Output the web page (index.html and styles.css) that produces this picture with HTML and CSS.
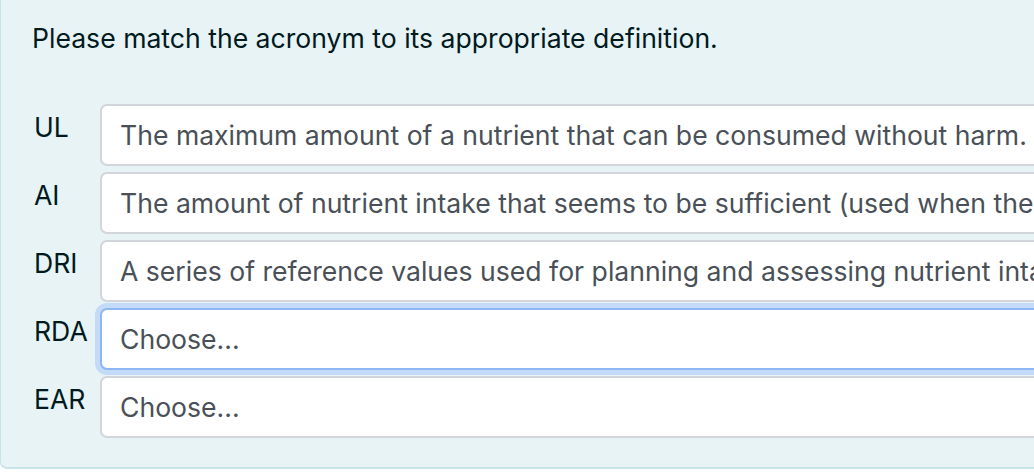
FILE: index.html
```html
<!DOCTYPE html>
<html lang="en">
<head>
<meta charset="utf-8">
<title>Match question</title>
<link rel="stylesheet" href="styles.css">
</head>
<body>
<div class="formulation">
  <div class="qtext">Please match the acronym to its appropriate definition.</div>
  <div class="answers">
    <div class="row">
      <div class="label">UL</div>
      <select class="choice">
        <option>The maximum amount of a nutrient that can be consumed without harm.</option>
      </select>
    </div>
    <div class="row">
      <div class="label">AI</div>
      <select class="choice">
        <option>The amount of nutrient intake that seems to be sufficient (used when the RDA cannot be determined).</option>
      </select>
    </div>
    <div class="row">
      <div class="label">DRI</div>
      <select class="choice">
        <option>A series of reference values used for planning and assessing nutrient intakes of healthy people.</option>
      </select>
    </div>
    <div class="row">
      <div class="label">RDA</div>
      <select class="choice focused">
        <option>Choose...</option>
      </select>
    </div>
    <div class="row">
      <div class="label">EAR</div>
      <select class="choice">
        <option>Choose...</option>
      </select>
    </div>
  </div>
</div>
</body>
</html>
```
FILE: styles.css
```css
html, body {
  margin: 0;
  padding: 0;
  overflow: hidden;
  background: #ffffff;
}

body {
  font-family: Inter, "Open Sans", "Liberation Sans", sans-serif;
  font-size: 26.6px;
  line-height: 1.5;
  color: #001a1e;
}

.formulation {
  background: #e7f3f5;
  border-left: 1px solid #c7e4e9;
  border-bottom: 2px solid #c7e4e9;
  border-radius: 0 0 7px 7px;
  padding: 19px 0 29px 31px;
  width: 1500px;
}

.qtext {
  margin-bottom: 45px;
}

.answers {
  display: flex;
  flex-direction: column;
  gap: 6px;
}

.row {
  display: flex;
  align-items: flex-start;
}

.label {
  width: 68px;
  flex: none;
  padding-top: 4px;
  padding-left: 2px;
  box-sizing: border-box;
  color: #001a1e;
}

.choice {
  -webkit-appearance: none;
  appearance: none;
  flex: none;
  width: 1400px;
  height: 62px;
  box-sizing: border-box;
  margin: 0;
  padding: 0 0 0 18px;
  font-family: inherit;
  font-size: 26.6px;
  color: #495057;
  background: #ffffff;
  border: 2px solid #d2d6da;
  border-radius: 7px;
  outline: none;
}

.choice.focused {
  border-color: #8db6f5;
  box-shadow: 0 0 0 5px #c3daf8;
}
```
